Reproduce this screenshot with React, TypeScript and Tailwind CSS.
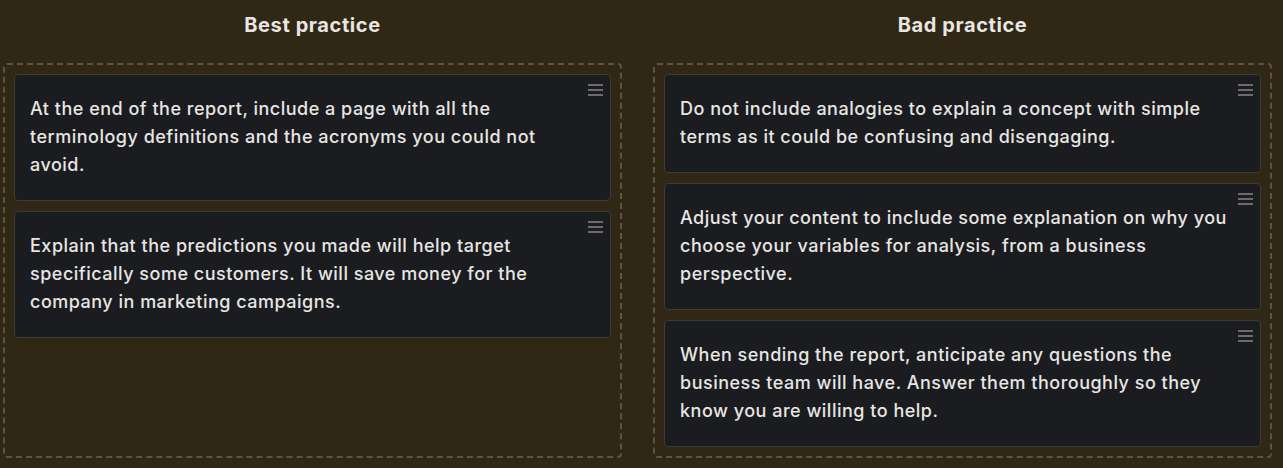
import React from "react";

const best = [
  "At the end of the report, include a page with all the terminology definitions and the acronyms you could not avoid.",
  "Explain that the predictions you made will help target specifically some customers. It will save money for the company in marketing campaigns.",
];
const bad = [
  "Do not include analogies to explain a concept with simple terms as it could be confusing and disengaging.",
  "Adjust your content to include some explanation on why you choose your variables for analysis, from a business perspective.",
  "When sending the report, anticipate any questions the business team will have. Answer them thoroughly so they know you are willing to help.",
];

function Grip() {
  return (
    <div className="absolute right-[7px] top-[9px] flex flex-col gap-[3px]">
      <div className="w-[15px] h-[2px] bg-[#6b6b6b]" />
      <div className="w-[15px] h-[2px] bg-[#6b6b6b]" />
      <div className="w-[15px] h-[2px] bg-[#6b6b6b]" />
    </div>
  );
}

function Card({ text }: { text: string }) {
  return (
    <div className="relative bg-[#1b1c1f] border border-[#3d3b36] rounded-[4px] pl-[15px] pr-[26px] pt-[20px] pb-[21px]">
      <Grip />
      <p className="text-[18px] leading-[28px] tracking-[0.5px] text-[#e8e6e3] font-medium">{text}</p>
    </div>
  );
}

function Column({ title, items }: { title: string; items: string[] }) {
  return (
    <div className="flex-1 flex flex-col">
      <div className="h-[49px] flex items-center justify-center mb-[14px]">
        <h2 className="text-[20px] font-bold tracking-[0.6px] text-[#e8e6e3]">{title}</h2>
      </div>
      <div className="flex-1 border-2 border-dashed border-[#5e5340] rounded-[4px] p-[9px] flex flex-col gap-[10px]">
        {items.map((t, i) => (
          <Card key={i} text={t} />
        ))}
      </div>
    </div>
  );
}

export default function App() {
  return (
    <div
      className="w-full h-[468px] bg-[#302715] flex gap-[31px] pl-[3px] pr-[11px] pb-[10px]"
      style={{ fontFamily: "Inter, 'Noto Sans', sans-serif" }}
    >
      <Column title="Best practice" items={best} />
      <Column title="Bad practice" items={bad} />
    </div>
  );
}
